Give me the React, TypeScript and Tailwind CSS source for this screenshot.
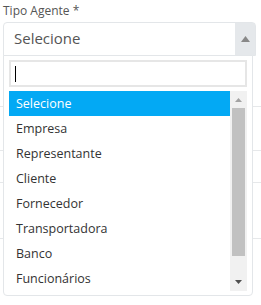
import React from "react";

const items = [
  "Selecione",
  "Empresa",
  "Representante",
  "Cliente",
  "Fornecedor",
  "Transportadora",
  "Banco",
  "Funcionários",
];

export default function App() {
  return (
    <div
      className="relative w-[261px] h-[305px] bg-white overflow-hidden"
      style={{ fontFamily: '"Open Sans", "Noto Sans", sans-serif' }}
    >
      <div className="pl-[3px] pt-[2px] h-[22px] text-[12px] leading-[18px] text-[#555]">
        Tipo Agente *
      </div>
      <div className="ml-[3px] w-[253px] h-[34px] border border-[#e3e6e9] rounded-t-[4px] flex">
        <div className="flex-1 pl-[10px] text-[15px] leading-[31px] text-[#555]">Selecione</div>
        <div className="w-[20px] bg-[#e5e8eb] flex items-center justify-center">
          <svg width="9" height="6" viewBox="0 0 9 6">
            <path d="M0 6 L4.5 0 L9 6 Z" fill="#888" />
          </svg>
        </div>
      </div>
      {/* background form lines */}
      <div className="flex flex-col">
        <div className="h-[51px] border-b border-[#e6e8ea]" />
        <div className="h-[44px] border-b border-[#e6e8ea]" />
        <div className="h-[32px] border-b border-[#e6e8ea]" />
        <div className="h-[56px] border-b border-[#e6e8ea]" />
      </div>
      {/* dropdown */}
      <div className="absolute left-[3px] top-[55px] w-[250px] h-[241px] bg-white border border-[#e3e6e9] rounded-b-[4px] px-[5px] pt-[4px]">
        <div className="h-[27px] border-2 border-[#e6e6e6] flex items-center pl-[4px]">
          <div className="w-px h-[16px] bg-black" />
        </div>
        <div className="mt-[4px] flex h-[200px]">
          <div className="flex-1 flex flex-col">
            {items.map((it, i) => (
              <div
                key={it}
                className={
                  "h-[25px] pl-[7px] text-[12.5px] leading-[25px] " +
                  (i === 0 ? "bg-[#03a9f4] text-white" : "text-[#333]")
                }
              >
                {it}
              </div>
            ))}
          </div>
          <div className="w-[17px] bg-[#f1f1f1] flex flex-col items-center">
            <div className="h-[17px] flex items-center justify-center">
              <svg width="7" height="4" viewBox="0 0 7 4">
                <path d="M0 4 L3.5 0 L7 4 Z" fill="#a3a3a3" />
              </svg>
            </div>
            <div className="w-[13px] h-[148px] bg-[#c1c1c1]" />
            <div className="flex-1 flex items-end justify-center pb-[7px]">
              <svg width="7" height="4" viewBox="0 0 7 4">
                <path d="M0 0 L3.5 4 L7 0 Z" fill="#505050" />
              </svg>
            </div>
          </div>
        </div>
      </div>
    </div>
  );
}
